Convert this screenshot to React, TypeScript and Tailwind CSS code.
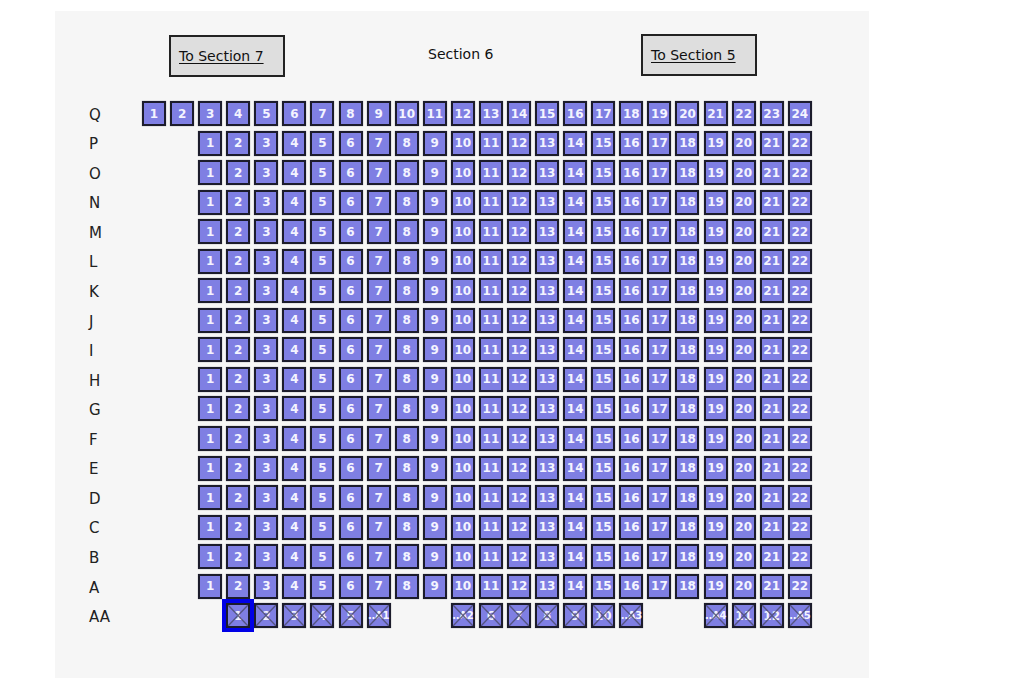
const ROWS = ["Q", "P", "O", "N", "M", "L", "K", "J", "I", "H", "G", "F", "E", "D", "C", "B", "A"]

const AA_SEATS: { col: number; label: string }[] = [
  { col: 4, label: "1" },
  { col: 5, label: "2" },
  { col: 6, label: "3" },
  { col: 7, label: "4" },
  { col: 8, label: "5" },
  { col: 9, label: "..A1" },
  { col: 12, label: "..A2" },
  { col: 13, label: "6" },
  { col: 14, label: "7" },
  { col: 15, label: "8" },
  { col: 16, label: "9" },
  { col: 17, label: "10" },
  { col: 18, label: "..A3" },
  { col: 21, label: "..A4" },
  { col: 22, label: "11" },
  { col: 23, label: "12" },
  { col: 24, label: "..A5" },
]

function Seat({ label, taken, selected, col }: { label: string; taken?: boolean; selected?: boolean; col: number }) {
  return (
    <div
      style={{ gridColumnStart: col }}
      className={`relative flex h-[25px] w-[24px] items-center justify-center overflow-visible border-2 border-[#1c1c2c] bg-[#7f7fe3] text-[12px] leading-none font-semibold text-[#f4f4ff] shadow-[0_0_1px_#888] ${
        selected ? "outline-[4px] outline-[#0000e6] outline-offset-[0px] z-10" : ""
      }`}
    >
      <span className={taken && label.length > 2 ? "text-[10px] tracking-[-0.3px] whitespace-nowrap" : ""}>{label}</span>
      {taken ? (
        <svg className="absolute inset-0 h-full w-full" viewBox="0 0 20 21" preserveAspectRatio="none">
          <path d="M0 0L20 21M20 0L0 21" stroke="#4a4a6a" strokeOpacity="0.8" strokeWidth="1.4" />
        </svg>
      ) : null}
    </div>
  )
}

function SectionLink({ label, className }: { label: string; className: string }) {
  return (
    <a className={`flex h-[42px] w-[116px] items-center border-2 border-[#222] bg-[#dedede] pl-[8px] text-[14px] text-[#111] underline underline-offset-2 ${className}`}>
      {label}
    </a>
  )
}

export default function App() {
  return (
    <div className="h-[678px] w-[1024px] overflow-hidden bg-white pt-[11px] pl-[55px] font-['DejaVu_Sans',sans-serif]">
      <div className="h-[667px] w-[814px] bg-[#f6f6f6] pt-[23px]">
        <div className="flex h-[43px] items-start pl-[114px]">
          <SectionLink label="To Section 7" className="mt-[1px]" />
          <span className="mt-[10px] ml-[143px] w-[66px] text-[14px] whitespace-nowrap text-[#111]">Section 6</span>
          <SectionLink label="To Section 5" className="ml-[147px]" />
        </div>
        <div className="mt-[24px] grid grid-cols-[53px_1fr] gap-y-[4.56px] pl-[34px]">
          {ROWS.map((row, i) => (
            <div key={row} className="contents">
              <div className="flex h-[25px] items-center pt-[3px] text-[15px] text-[#222]">{row}</div>
              <div className="grid grid-cols-[repeat(24,24px)] gap-x-[4.09px]">
                {Array.from({ length: i === 0 ? 24 : 22 }, (_, n) => (
                  <Seat key={n} col={(i === 0 ? 1 : 3) + n} label={String(n + 1)} />
                ))}
              </div>
            </div>
          ))}
          <div className="flex h-[25px] items-center pt-[3px] text-[15px] text-[#222]">AA</div>
          <div className="grid grid-cols-[repeat(24,24px)] gap-x-[4.09px]">
            {AA_SEATS.map((s, i) => (
              <Seat key={s.col} col={s.col} label={s.label} taken selected={i === 0} />
            ))}
          </div>
        </div>
      </div>
    </div>
  )
}
